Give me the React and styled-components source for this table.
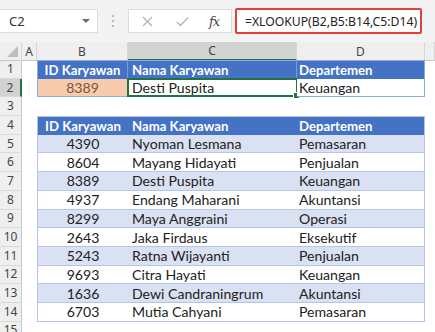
import React from 'react';
import styled, { createGlobalStyle, css } from 'styled-components';

const Global = createGlobalStyle`
  html, body { margin: 0; padding: 0; background: #ffffff; }
  body { width: 435px; height: 332px; overflow: hidden; }
  * { box-sizing: border-box; }
`;

const COLS = '22px 15px 91px 169px 128px 1fr';
const ROW_H = 18.7;
const CELL_FONT = `"Lato", "Noto Sans", sans-serif`;
const UI_FONT = `"Noto Sans", "Open Sans", sans-serif`;

const Page = styled.div`
  width: 435px;
  height: 332px;
  overflow: hidden;
  background: #fff;
  display: flex;
  flex-direction: column;
`;

const FormulaBar = styled.div`
  height: 42px;
  flex: none;
  background: #f3f3f3;
  display: flex;
  align-items: flex-start;
  padding-top: 9px;
`;

const NameBox = styled.div`
  width: 98px;
  height: 24px;
  background: #fff;
  border: 1px solid #dcdcdc;
  border-left: none;
  display: flex;
  align-items: center;
  justify-content: space-between;
  padding: 0 7px 0 9px;
  font-family: ${UI_FONT};
  font-size: 13px;
  color: #333;
`;

const Caret = styled.span`
  width: 0;
  height: 0;
  border-left: 4px solid transparent;
  border-right: 4px solid transparent;
  border-top: 4px solid #6b6b6b;
`;

const Grip = styled.div`
  width: 30px;
  height: 24px;
  display: flex;
  flex-direction: column;
  align-items: center;
  justify-content: center;
  gap: 3px;
`;

const Dot = styled.span`
  width: 2px;
  height: 2px;
  border-radius: 1px;
  background: #a6a6a6;
`;

const IconBox = styled.div`
  width: 104px;
  height: 24px;
  background: #fff;
  border: 1px solid #dcdcdc;
  display: flex;
  align-items: center;
  padding-left: 11px;
`;

const IconSlot = styled.div`
  width: ${p => p.$w}px;
  display: flex;
  align-items: center;
  justify-content: center;
`;

const Fx = styled.span`
  font-family: "DejaVu Serif", "Liberation Serif", serif;
  font-style: italic;
  font-size: 13px;
  color: #444;
  letter-spacing: -1px;
`;

const FormulaBox = styled.div`
  margin-left: 3px;
  margin-top: -1px;
  width: 187px;
  height: 26px;
  border: 2px solid #e2403a;
  border-radius: 2px;
  background: #fff;
  display: flex;
  align-items: center;
  padding-left: 8px;
  font-family: ${UI_FONT};
  font-size: 12.2px;
  color: #222;
  white-space: nowrap;
`;

const Row = styled.div`
  display: grid;
  grid-template-columns: ${COLS};
  height: ${p => p.$h}px;
  flex: none;
`;

const ColHead = styled.div`
  background: ${p => (p.$sel ? '#d2d2d2' : '#efefef')};
  border-right: 1px solid #d6d6d6;
  border-bottom: ${p => (p.$sel ? '2px solid #217346' : '1px solid #c8c8c8')};
  display: flex;
  align-items: center;
  justify-content: center;
  font-family: ${UI_FONT};
  font-size: 12px;
  color: #444;
`;

const Corner = styled.div`
  background: #efefef;
  border-right: 1px solid #d6d6d6;
  border-bottom: 1px solid #c8c8c8;
  position: relative;
  &::after {
    content: '';
    position: absolute;
    right: 3px;
    bottom: 3px;
    width: 0;
    height: 0;
    border-left: 11px solid transparent;
    border-bottom: 11px solid #bdbdbd;
  }
`;

const RowHead = styled.div`
  background: ${p => (p.$sel ? '#d2d2d2' : '#efefef')};
  border-right: ${p => (p.$sel ? '2px solid #217346' : '1px solid #c8c8c8')};
  border-bottom: 1px solid #d9d9d9;
  display: flex;
  align-items: ${p => (p.$top ? 'flex-start' : 'center')};
  justify-content: center;
  font-family: ${UI_FONT};
  font-size: 12px;
  line-height: 1;
  padding-top: ${p => (p.$top ? 2 : 0)}px;
  color: #444;
`;

const Cell = styled.div`
  position: relative;
  display: flex;
  align-items: center;
  font-family: ${CELL_FONT};
  font-size: 14.1px;
  color: #222;
  white-space: nowrap;
  background: ${p => p.$bg || 'transparent'};
  justify-content: ${p => (p.$center ? 'center' : 'flex-start')};
  padding-left: ${p => (p.$center ? 0 : p.$pl || 4)}px;
  ${p => p.$head && css`
    color: #fff;
    font-weight: 700;
    font-size: 13.2px;
  `}
  ${p => p.$bt && css`border-top: 1px solid ${p.$bt};`}
  ${p => p.$bb && css`border-bottom: 1px solid ${p.$bb};`}
  ${p => p.$bl && css`border-left: 1px solid ${p.$bl};`}
  ${p => p.$br && css`border-right: 1px solid ${p.$br};`}
`;

const Selection = styled.div`
  position: absolute;
  left: -1px;
  top: -1px;
  right: -1px;
  bottom: -1px;
  border: 2px solid #217346;
  pointer-events: none;
  &::after {
    content: '';
    position: absolute;
    right: -4px;
    bottom: -4px;
    width: 5px;
    height: 5px;
    background: #217346;
    border: 1px solid #fff;
  }
`;

const BLUE = '#4472c4';
const LIGHT = '#d9e1f2';
const ORANGE = '#f8cbad';
const T1_BORDER = '#8ea9db';
const T2_BORDER = '#b4c6e7';

const employees = [
  ['4390', 'Nyoman Lesmana', 'Pemasaran'],
  ['8604', 'Mayang Hidayati', 'Penjualan'],
  ['8389', 'Desti Puspita', 'Keuangan'],
  ['4937', 'Endang Maharani', 'Akuntansi'],
  ['8299', 'Maya Anggraini', 'Operasi'],
  ['2643', 'Jaka Firdaus', 'Eksekutif'],
  ['5243', 'Ratna Wijayanti', 'Penjualan'],
  ['9693', 'Citra Hayati', 'Keuangan'],
  ['1636', 'Dewi Candraningrum', 'Akuntansi'],
  ['6703', 'Mutia Cahyani', 'Pemasaran'],
];

function XIcon() {
  return (
    <svg width="11" height="11" viewBox="0 0 11 11">
      <path d="M1 1 L10 10 M10 1 L1 10" stroke="#b3b3b3" strokeWidth="1.3" fill="none" />
    </svg>
  );
}

function CheckIcon() {
  return (
    <svg width="13" height="11" viewBox="0 0 13 11">
      <path d="M1 6 L4.5 9.5 L12 1.5" stroke="#b3b3b3" strokeWidth="1.3" fill="none" />
    </svg>
  );
}

function Blank() {
  return <Cell />;
}

export default function App() {
  return (
    <Page>
      <Global />
      <FormulaBar>
        <NameBox>
          <span>C2</span>
          <Caret />
        </NameBox>
        <Grip>
          <Dot />
          <Dot />
          <Dot />
        </Grip>
        <IconBox>
          <IconSlot $w={14}><XIcon /></IconSlot>
          <IconSlot $w={21} />
          <IconSlot $w={14}><CheckIcon /></IconSlot>
          <IconSlot $w={18} />
          <IconSlot $w={14}><Fx>fx</Fx></IconSlot>
        </IconBox>
        <FormulaBox>=XLOOKUP(B2,B5:B14,C5:D14)</FormulaBox>
      </FormulaBar>

      <Row $h={18}>
        <Corner />
        <ColHead>A</ColHead>
        <ColHead>B</ColHead>
        <ColHead $sel>C</ColHead>
        <ColHead>D</ColHead>
        <ColHead />
      </Row>

      <Row $h={ROW_H}>
        <RowHead>1</RowHead>
        <Blank />
        <Cell $head $center $bg={BLUE} $bt={T1_BORDER} $bl={T1_BORDER} $br="#7d9bd3">ID Karyawan</Cell>
        <Cell $head $bg={BLUE} $bt={T1_BORDER} $br="#7d9bd3">Nama Karyawan</Cell>
        <Cell $head $pl={2} $bg={BLUE} $bt={T1_BORDER} $br={T1_BORDER}>Departemen</Cell>
        <Blank />
      </Row>
      <Row $h={ROW_H}>
        <RowHead $sel>2</RowHead>
        <Blank />
        <Cell $center $bg={ORANGE} $bl={T1_BORDER} $bb={T1_BORDER} $br={T1_BORDER} style={{ color: '#7a5540' }}>8389</Cell>
        <Cell $bb={T1_BORDER} $bg="#fff">
          Desti Puspita
          <Selection />
        </Cell>
        <Cell $pl={2} $bg="#fff" $bb={T1_BORDER} $br={T1_BORDER}>Keuangan</Cell>
        <Blank />
      </Row>
      <Row $h={ROW_H}>
        <RowHead>3</RowHead>
        <Blank /><Blank /><Blank /><Blank /><Blank />
      </Row>
      <Row $h={ROW_H}>
        <RowHead>4</RowHead>
        <Blank />
        <Cell $head $center $bg={BLUE} $bt={T2_BORDER} $bl={T2_BORDER}>ID Karyawan</Cell>
        <Cell $head $bg={BLUE} $bt={T2_BORDER}>Nama Karyawan</Cell>
        <Cell $head $pl={2} $bg={BLUE} $bt={T2_BORDER} $br={T2_BORDER}>Departemen</Cell>
        <Blank />
      </Row>
      {employees.map(([id, name, dept], i) => {
        const bg = i % 2 === 0 ? LIGHT : '#fff';
        return (
          <Row key={id} $h={ROW_H}>
            <RowHead>{i + 5}</RowHead>
            <Blank />
            <Cell $center $bg={bg} $bl={T2_BORDER} $bb={T2_BORDER}>{id}</Cell>
            <Cell $bg={bg} $bb={T2_BORDER}>{name}</Cell>
            <Cell $pl={2} $bg={bg} $bb={T2_BORDER} $br={T2_BORDER}>{dept}</Cell>
            <Blank />
          </Row>
        );
      })}
      <Row $h={ROW_H}>
        <RowHead $top>15</RowHead>
        <Blank /><Blank /><Blank /><Blank /><Blank />
      </Row>
    </Page>
  );
}
